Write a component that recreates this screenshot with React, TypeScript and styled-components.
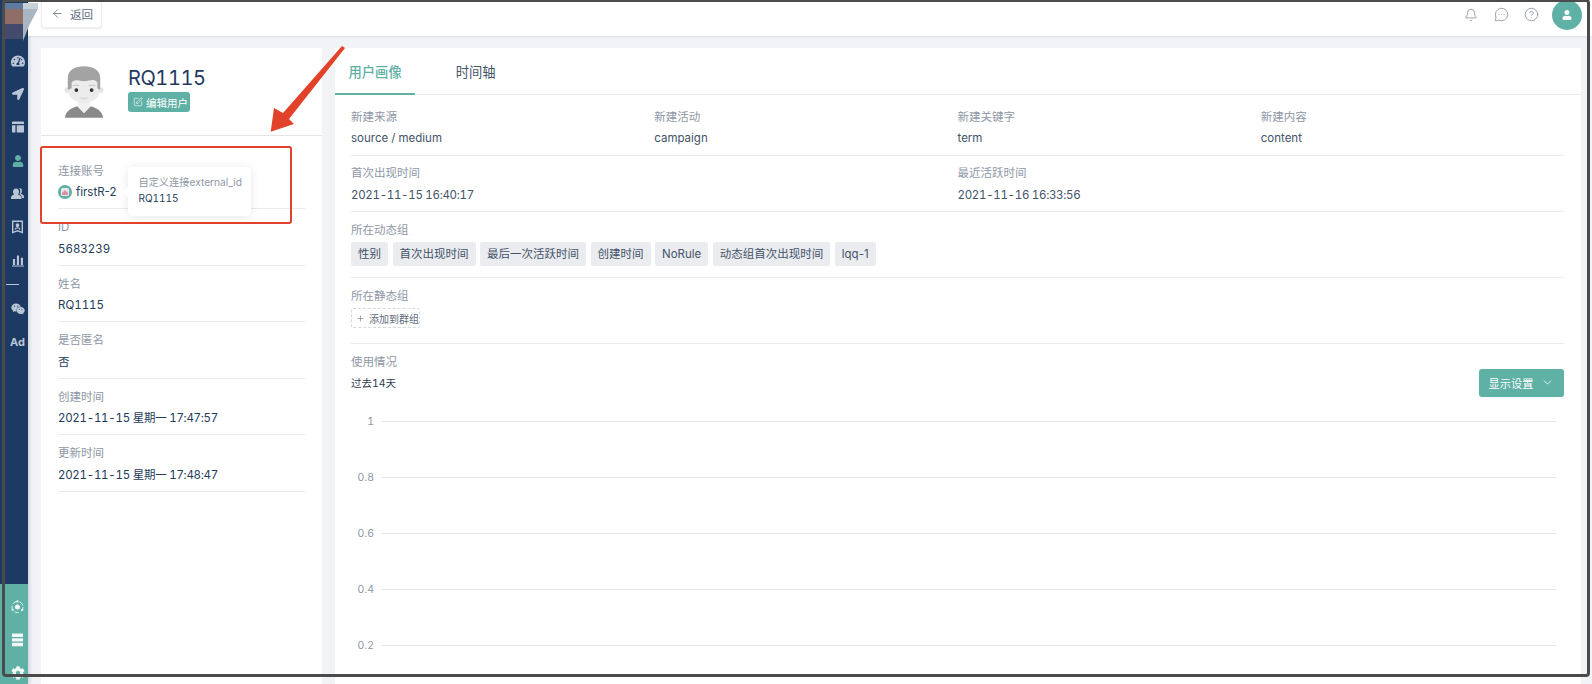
import React from "react";
import styled, { createGlobalStyle } from "styled-components";
import { FaCog, FaLocationArrow, FaTachometerAlt, FaUser, FaWeixin } from "react-icons/fa";
import { Bell, ChevronDown, CircleHelp, MessageCircleMore, ArrowLeft, Plus, SquarePen } from "lucide-react";

const NAVY = "#1c3a63";
const TEAL = "#5fb0a5";
const INK = "#243b5a";
const MUTED = "#8e97a5";
const LINE = "#e9ebee";

const infoRows = [
    { label: "ID", value: "5683239" },
    { label: "姓名", value: "RQ1115" },
    { label: "是否匿名", value: "否" },
    { label: "创建时间", value: "2021-11-15 星期一 17:47:57", date: true },
    { label: "更新时间", value: "2021-11-15 星期一 17:48:47", date: true },
];

const sourceFields = [
    { label: "新建来源", value: "source / medium" },
    { label: "新建活动", value: "campaign" },
    { label: "新建关键字", value: "term" },
    { label: "新建内容", value: "content" },
];

const timeFields = [
    { label: "首次出现时间", value: "2021-11-15 16:40:17" },
    { label: "最近活跃时间", value: "2021-11-16 16:33:56" },
];

const dynamicGroups = ["性别", "首次出现时间", "最后一次活跃时间", "创建时间", "NoRule", "动态组首次出现时间", "lqq-1"];
const ticks = ["1", "0.8", "0.6", "0.4", "0.2"];

const TableIcon = () => (
    <svg width="12" height="12" viewBox="0 0 14 13" fill="currentColor">
        <path d="M1 0h12a1 1 0 0 1 1 1v2H0V1a1 1 0 0 1 1-1zM0 4.500h4V13H1a1 1 0 0 1-1-1zM5.500 4.500H14V12a1 1 0 0 1-1 1H5.500z" />
    </svg>
);

const PeopleIcon = () => (
    <svg width="13" height="13" viewBox="0 0 13 13" fill="currentColor">
        <path d="M8 1c2 0 3 1.300 3 3 0 1.200-.5 2.200-1.300 2.800 1.800.4 3.300 1.400 3.300 3V11h-2c0-1.800-1-3-2.700-3.700C9 6.500 9.300 5.300 9.300 4.300 9.300 3 8.800 1.800 8 1z" />
        <path d="M5 1.500c1.900 0 3 1.400 3 3.300 0 1.100-.4 2.100-1.100 2.700 2 .5 3.600 1.500 3.600 3.200V12H0v-1.300c0-1.700 1.300-2.700 3.100-3.200C2.400 6.900 2 5.900 2 4.800 2 2.900 3.100 1.500 5 1.500z" />
    </svg>
);

const BookmarkIcon = () => (
    <svg width="11" height="14" viewBox="0 0 12 14" fill="currentColor">
        <path fillRule="evenodd" d="M0 0h12v14l-6-2-6 2zM1.500 1.500v10.400l4.500-1.500 4.500 1.500V1.500zM6 3a2 2 0 0 1 2 2c0 1-.6 2-2 2S4 6 4 5a2 2 0 0 1 2-2zM2.800 10c.2-1.800 1.500-2.600 3.200-2.600s3 .8 3.200 2.600l-1.200-.3c-.3-.8-1-1.100-2-1.100s-1.700.3-2 1.100z" />
    </svg>
);

const BarsIcon = () => (
    <svg width="12" height="13" viewBox="0 0 13 13" fill="currentColor">
        <path d="M1 5h2.300v6.500H1zM5.300 1h2.300v10.500H5.300zM9.600 3.500h2.300v8H9.600zM0 12h13v1H0z" />
    </svg>
);

const OrbitIcon = () => (
    <svg width="13" height="14" viewBox="0 0 14 15" fill="none" stroke="currentColor">
        <circle cx="7" cy="7.500" r="2.700" fill="currentColor" stroke="none" />
        <circle cx="7" cy="7.500" r="6" strokeDasharray="5 2.500" />
        <circle cx="7" cy="1.500" r="1.200" fill="currentColor" stroke="none" />
        <circle cx="1.800" cy="10.500" r="1.200" fill="currentColor" stroke="none" />
        <circle cx="12.200" cy="10.500" r="1.200" fill="currentColor" stroke="none" />
    </svg>
);

const ServerIcon = () => (
    <svg width="11" height="14" viewBox="0 0 12 14" fill="currentColor">
        <path d="M0 0h12v3.700H0zM0 5h12v3.700H0zM0 10h12v3.700H0z" />
    </svg>
);

const UserAvatar = () => (
    <svg width="40" height="54" viewBox="0 0 42 56">
        <path d="M1 55c1-7 6-10 13-12l7 7 7-7c7 2 12 5 13 12z" fill="#8a8a8a" />
        <path d="M14 43l7 7 7-7-2-6H16z" fill="#f1f1f1" />
        <circle cx="3.500" cy="26" r="3" fill="#e6e6e6" />
        <circle cx="38.500" cy="26" r="3" fill="#e6e6e6" />
        <path d="M4 17c0-9 7-14 17-14s17 5 17 14v9c0 8-9 14-17 14S4 34 4 26z" fill="#ececec" />
        <path d="M4 26V13C4 5 12 1 21 1s17 4 17 12v13l-3-2v-6c-2-3-5-3-9-2-3 1-7 1-10 0-4-1-6 0-8 2v6z" fill="#a3a3a3" />
        <circle cx="13" cy="26" r="2" fill="#333" />
        <circle cx="29" cy="26" r="2" fill="#333" />
        <path d="M9 21.500c2-1 5-1 7 0M26 21.500c2-1 5-1 7 0" stroke="#bdbdbd" fill="none" />
        <path d="M17 34c2 1 6 1 8 0" stroke="#cfcfcf" fill="none" />
    </svg>
);

const SourceBadge = () => (
    <svg width="14" height="14" viewBox="0 0 14 14">
        <circle cx="7" cy="7" r="7" fill={TEAL} />
        <rect x="3" y="3" width="8" height="8" rx="1.500" fill="#efe6ea" />
        <path d="M4 8l3-3 3 3v2H4z" fill="#d98fa5" />
    </svg>
);

const App = () => {
    return (
        <Page>
            <GlobalStyle />
            <Sidebar>
                <NavItem><FaTachometerAlt size={14} /></NavItem>
                <NavItem><FaLocationArrow size={12} /></NavItem>
                <NavItem><TableIcon /></NavItem>
                <NavItem $active><FaUser size={12} /></NavItem>
                <NavItem><PeopleIcon /></NavItem>
                <NavItem><BookmarkIcon /></NavItem>
                <NavItem><BarsIcon /></NavItem>
                <NavDivider />
                <NavItem><FaWeixin size={14} /></NavItem>
                <NavItem><AdMark>Ad</AdMark></NavItem>
                <SidebarFooter>
                    <NavItem $light><OrbitIcon /></NavItem>
                    <NavItem $light><ServerIcon /></NavItem>
                    <NavItem $light><FaCog size={14} /></NavItem>
                </SidebarFooter>
            </Sidebar>

            <Main>
                <TopBar>
                    <BackButton>
                        <ArrowLeft size={13} strokeWidth={1.4} />
                        <span>返回</span>
                    </BackButton>
                    <TopActions>
                        <Bell size={14} strokeWidth={1.3} />
                        <MessageCircleMore size={15} strokeWidth={1.2} />
                        <CircleHelp size={15} strokeWidth={1.2} />
                        <UserCircle><FaUser size={10} /></UserCircle>
                    </TopActions>
                </TopBar>

                <Content>
                    <ProfileCard>
                        <ProfileHead>
                            <UserAvatar />
                            <div>
                                <UserName>RQ1115</UserName>
                                <EditButton>
                                    <SquarePen size={10} strokeWidth={1.5} />
                                    编辑用户
                                </EditButton>
                            </div>
                        </ProfileHead>
                        <InfoList>
                            <InfoRow>
                                <InfoLabel>连接账号</InfoLabel>
                                <AccountValue>
                                    <SourceBadge />
                                    firstR-2
                                </AccountValue>
                                <Tooltip>
                                    <TooltipTitle>自定义连接external_id</TooltipTitle>
                                    <TooltipValue>RQ1115</TooltipValue>
                                </Tooltip>
                            </InfoRow>
                            {infoRows.map((row) => (
                                <InfoRow key={row.label}>
                                    <InfoLabel>{row.label}</InfoLabel>
                                    <InfoValue $tight={row.date}>{row.value}</InfoValue>
                                </InfoRow>
                            ))}
                        </InfoList>
                    </ProfileCard>

                    <DetailCard>
                        <Tabs>
                            <Tab $active>用户画像</Tab>
                            <Tab>时间轴</Tab>
                        </Tabs>
                        <DetailBody>
                            <FieldSection $columns={4} $first>
                                {sourceFields.map((field) => (
                                    <div key={field.label}>
                                        <FieldLabel>{field.label}</FieldLabel>
                                        <FieldValue>{field.value}</FieldValue>
                                    </div>
                                ))}
                            </FieldSection>
                            <FieldSection $columns={2}>
                                {timeFields.map((field) => (
                                    <div key={field.label}>
                                        <FieldLabel>{field.label}</FieldLabel>
                                        <FieldValue $tight>{field.value}</FieldValue>
                                    </div>
                                ))}
                            </FieldSection>
                            <GroupSection>
                                <FieldLabel>所在动态组</FieldLabel>
                                <TagList>
                                    {dynamicGroups.map((group) => (
                                        <Tag key={group}>{group}</Tag>
                                    ))}
                                </TagList>
                            </GroupSection>
                            <GroupSection>
                                <FieldLabel>所在静态组</FieldLabel>
                                <AddButton>
                                    <Plus size={11} strokeWidth={1.5} />
                                    添加到群组
                                </AddButton>
                            </GroupSection>
                            <UsageHead>
                                <UsageTitle>
                                    <FieldLabel>使用情况</FieldLabel>
                                    <RangeText>过去14天</RangeText>
                                </UsageTitle>
                                <SettingsButton>
                                    显示设置
                                    <ChevronDown size={13} strokeWidth={1.5} />
                                </SettingsButton>
                            </UsageHead>
                            <Chart>
                                {ticks.map((tick) => (
                                    <ChartRow key={tick}>
                                        <TickLabel>{tick}</TickLabel>
                                        <GridLine />
                                    </ChartRow>
                                ))}
                            </Chart>
                        </DetailBody>
                    </DetailCard>
                </Content>
            </Main>

            <BlurPatch>
                <Swatch $left={5} $top={3} $width={18} $height={6} $color="#5f7c9f" />
                <Swatch $left={5} $top={9} $width={18} $height={15} $color="#8f6e68" />
                <Swatch $left={5} $top={24} $width={18} $height={15} $color="#434a6b" />
                <LightShard />
            </BlurPatch>
            <Highlight />
            <ArrowMark viewBox="0 0 1592 684" width="1592" height="684">
                <polygon points="270.700,131.700 274,108 283,113 342,46 345,48 289,119 294,124" fill="#e2412a" />
            </ArrowMark>
            <ScreenFrame />
        </Page>
    );
};

export default App;

const GlobalStyle = createGlobalStyle`
html, body {
    margin: 0;
    padding: 0;
    background: #ffffff;
}
* {
    box-sizing: border-box;
}
`;

const Page = styled.div`
position: relative;
display: flex;
width: 1592px;
height: 684px;
overflow: hidden;
background: #f1f3f6;
font-family: Inter, "Noto Sans CJK SC", sans-serif;
font-size: 12px;
font-variant-numeric: tabular-nums;
color: ${INK};
`;

const Sidebar = styled.nav`
flex: 0 0 28px;
display: flex;
flex-direction: column;
padding-top: 44px;
background: ${NAVY};
box-shadow: 2px 0 3px rgba(60, 90, 130, 0.18);
z-index: 1;
`;

const NavItem = styled.div<{ $active?: boolean; $light?: boolean }>`
flex: 0 0 33.3px;
display: flex;
align-items: center;
justify-content: center;
padding-left: 7px;
color: ${({ $active, $light }) => ($active ? TEAL : $light ? "#f2f8f7" : "#b9c6d6")};
`;

const NavDivider = styled.div`
flex: 0 0 1px;
width: 13px;
margin: 7px 0 7px 6px;
background: #b9c6d6;
`;

const AdMark = styled.span`
font-size: 11px;
font-weight: 700;
`;

const SidebarFooter = styled.div`
margin-top: auto;
display: flex;
flex-direction: column;
flex: 0 0 100px;
min-height: 0;
overflow: hidden;
padding-top: 6px;
background: ${TEAL};
`;

const Main = styled.div`
flex: 1;
min-width: 0;
display: flex;
flex-direction: column;
`;

const TopBar = styled.header`
flex: 0 0 36px;
display: flex;
align-items: flex-start;
justify-content: space-between;
padding: 0 10px 0 13px;
background: #ffffff;
box-shadow: 0 1px 2px rgba(0, 0, 0, 0.08);
z-index: 1;
`;

const BackButton = styled.button`
display: flex;
align-items: center;
gap: 6px;
width: 61px;
height: 28px;
padding: 0 0 0 9px;
border: 1px solid #eceef0;
border-top: none;
border-radius: 0 0 3px 3px;
background: #ffffff;
box-shadow: 0 1px 2px rgba(0, 0, 0, 0.08);
font: inherit;
font-size: 11.500px;
color: #5d6b7c;
`;

const TopActions = styled.div`
display: flex;
align-items: center;
gap: 15.500px;
height: 29px;
color: #7d8794;
`;

const UserCircle = styled.div`
display: flex;
align-items: center;
justify-content: center;
width: 30px;
height: 30px;
margin-left: -2.500px;
border-radius: 50%;
background: ${TEAL};
color: #ffffff;
`;

const Content = styled.main`
flex: 1;
min-height: 0;
display: flex;
gap: 13px;
padding: 12px 11px 0 13px;
`;

const ProfileCard = styled.section`
flex: 0 0 281px;
background: #ffffff;
`;

const ProfileHead = styled.div`
display: flex;
align-items: flex-start;
gap: 24px;
height: 88px;
padding: 17px 0 0 23px;
border-bottom: 1px solid #e3e5e8;
`;

const UserName = styled.div`
line-height: 26px;
font-size: 20px;
letter-spacing: -0.4px;
color: #1f3a5f;
`;

const EditButton = styled.button`
display: flex;
align-items: center;
gap: 3px;
width: 62px;
height: 20px;
margin-top: 1px;
padding: 0 0 0 5px;
border: none;
border-radius: 3px;
background: ${TEAL};
font: inherit;
font-size: 10.500px;
color: #ffffff;
`;

const InfoList = styled.div`
padding: 16.500px 17px 0;
`;

const InfoRow = styled.div`
position: relative;
height: 56.500px;
padding-top: 8px;
border-bottom: 1px solid ${LINE};
`;

const InfoLabel = styled.div`
line-height: 20px;
font-size: 11.500px;
color: ${MUTED};
`;

const InfoValue = styled.div<{ $tight?: boolean }>`
margin-top: 1.500px;
line-height: 20px;
font-size: 11.500px;
letter-spacing: ${({ $tight }) => ($tight ? "-0.27px" : "0")};
color: ${INK};
`;

const AccountValue = styled(InfoValue)`
display: flex;
align-items: center;
gap: 4px;
font-variant-numeric: normal;
`;

const Tooltip = styled.div`
position: absolute;
left: 70px;
top: 14px;
width: 123px;
height: 49px;
padding: 7.500px 10.500px;
border-radius: 4px;
background: #ffffff;
box-shadow: 0 1px 8px rgba(40, 60, 90, 0.12);

&::before {
    content: "";
    position: absolute;
    left: -4px;
    top: 21px;
    width: 8px;
    height: 8px;
    background: #ffffff;
    transform: rotate(45deg);
}
`;

const TooltipTitle = styled.div`
position: relative;
line-height: 17px;
font-size: 10.200px;
color: ${MUTED};
white-space: nowrap;
`;

const TooltipValue = styled.div`
position: relative;
line-height: 15px;
font-size: 10px;
color: ${INK};
`;

const DetailCard = styled.section`
flex: 1;
min-width: 0;
background: #ffffff;
`;

const Tabs = styled.div`
display: flex;
height: 46.500px;
border-bottom: 1px solid ${LINE};
`;

const Tab = styled.div<{ $active?: boolean }>`
height: 46.500px;
margin-right: 27px;
padding: 0 13.500px;
line-height: 48px;
font-size: 13.300px;
font-weight: ${({ $active }) => ($active ? 500 : 400)};
color: ${({ $active }) => ($active ? TEAL : "#45556a")};
border-bottom: 2px solid ${({ $active }) => ($active ? TEAL : "transparent")};
`;

const DetailBody = styled.div`
padding: 0 17px 0 16px;
`;

const FieldSection = styled.div<{ $columns: number; $first?: boolean }>`
display: grid;
grid-template-columns: repeat(${({ $columns }) => $columns}, 1fr);
height: ${({ $first }) => ($first ? "61.500px" : "56px")};
padding-top: ${({ $first }) => ($first ? "12px" : "7px")};
border-bottom: 1px solid ${LINE};
`;

const FieldLabel = styled.div`
line-height: 20px;
font-size: 11.500px;
color: ${MUTED};
`;

const FieldValue = styled.div<{ $tight?: boolean }>`
margin-top: 1.500px;
line-height: 20px;
font-size: 11.500px;
letter-spacing: ${({ $tight }) => ($tight ? "-0.3px" : "0")};
color: #43536a;
`;

const GroupSection = styled.div`
height: 66px;
padding-top: 8px;
border-bottom: 1px solid ${LINE};
`;

const TagList = styled.div`
display: flex;
gap: 4.500px;
margin-top: 2px;
`;

const Tag = styled.div`
height: 24px;
padding: 0 7px;
line-height: 24px;
border-radius: 2px;
background: #eaecef;
font-size: 11.500px;
font-variant-numeric: normal;
color: #43536a;
`;

const AddButton = styled.button`
display: flex;
align-items: center;
gap: 4px;
width: 69px;
height: 20px;
margin-top: 2px;
padding: 0 0 0 4px;
border: 1px dashed #d5d8dc;
border-radius: 2px;
background: #ffffff;
font: inherit;
font-size: 10px;
white-space: nowrap;
color: #5d6b7c;
`;

const UsageHead = styled.div`
display: flex;
align-items: flex-end;
justify-content: space-between;
padding-top: 8px;
`;

const UsageTitle = styled.div`
padding-bottom: 3px;
`;

const RangeText = styled.div`
margin-top: 1.500px;
line-height: 20px;
font-size: 10.500px;
color: #2f3d50;
`;

const SettingsButton = styled.button`
display: flex;
align-items: center;
justify-content: center;
gap: 8px;
width: 85px;
height: 28px;
border: none;
border-radius: 3px;
background: ${TEAL};
font: inherit;
font-size: 11.200px;
color: #ffffff;
`;

const Chart = styled.div`
margin-top: 24px;
padding-right: 8px;
`;

const ChartRow = styled.div`
display: flex;
align-items: flex-start;
gap: 7px;
height: 56px;
`;

const TickLabel = styled.div`
flex: 0 0 23px;
margin-top: -6px;
line-height: 13px;
text-align: right;
font-size: 10.500px;
color: #8f98a6;
`;

const GridLine = styled.div`
flex: 1;
height: 1px;
background: #e4e6e9;
`;

const BlurPatch = styled.div`
position: absolute;
left: 0;
top: 0;
width: 40px;
height: 44px;
z-index: 2;
filter: blur(0.5px);
`;

const Swatch = styled.div<{ $left: number; $top: number; $width: number; $height: number; $color: string }>`
position: absolute;
left: ${({ $left }) => $left}px;
top: ${({ $top }) => $top}px;
width: ${({ $width }) => $width}px;
height: ${({ $height }) => $height}px;
background: ${({ $color }) => $color};
`;

const LightShard = styled.div`
position: absolute;
left: 23px;
top: 3px;
width: 15px;
height: 38px;
background: linear-gradient(#c8d0d8 0 6px, #a9b6c2 6px);
clip-path: polygon(0 0, 100% 0, 100% 15%, 40% 60%, 0 100%);
`;

const Highlight = styled.div`
position: absolute;
left: 40px;
top: 146px;
width: 252px;
height: 78px;
border: 2px solid #e2412a;
border-radius: 3px;
z-index: 3;
`;

const ArrowMark = styled.svg`
position: absolute;
left: 0;
top: 0;
z-index: 3;
pointer-events: none;
`;

const ScreenFrame = styled.div`
position: absolute;
left: 2px;
top: -1px;
width: 1588px;
height: 678px;
border: 3px solid #4b4b4b;
border-radius: 4px;
z-index: 4;
pointer-events: none;
`;
